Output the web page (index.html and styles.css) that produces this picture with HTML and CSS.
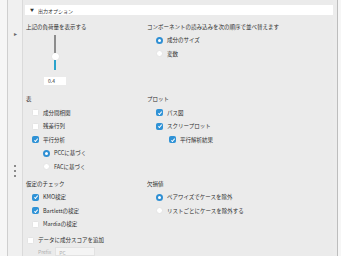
FILE: index.html
```html
<!DOCTYPE html>
<html>
<head>
  <meta charset="utf-8">
  <title>出力オプション</title>
  <link rel="stylesheet" href="styles.css">
</head>
<body>
  <div class="app">
    <div class="gutter"></div>
    <div class="sidebar">
      <span class="expand">&#9656;</span>
      <div class="grip"><i></i><i></i><i></i></div>
    </div>
    <div class="panel">
      <div class="header"><span class="tri">&#9660;</span>出力オプション</div>

      <div class="grid">
        <div class="section s1">
          <div class="title">上記の負荷量を表示する</div>
          <div class="slider">
            <div class="track"></div>
            <div class="knob"></div>
            <div class="fill"></div>
            <div class="value">0.4</div>
          </div>
        </div>
        <div class="section s1">
          <div class="title">コンポーネントの読み込みを次の順序で並べ替えます</div>
          <div class="row in-r"><span class="radio on"></span>成分のサイズ</div>
          <div class="row in-r"><span class="radio"></span>変数</div>
        </div>

        <div class="section s2">
          <div class="title">表</div>
          <div class="row in-l"><span class="check"></span>成分間相関</div>
          <div class="row in-l"><span class="check"></span>残差行列</div>
          <div class="row in-l"><span class="check on"></span>平行分析</div>
          <div class="row in-l2"><span class="radio on"></span>PCCに基づく</div>
          <div class="row in-l2"><span class="radio"></span>FACに基づく</div>
        </div>
        <div class="section s2">
          <div class="title">プロット</div>
          <div class="row in-r"><span class="check on"></span>パス図</div>
          <div class="row in-r"><span class="check on"></span>スクリープロット</div>
          <div class="row in-r2"><span class="check on"></span>平行解析結果</div>
        </div>

        <div class="section s3">
          <div class="title">仮定のチェック</div>
          <div class="row in-l"><span class="check on"></span>KMO検定</div>
          <div class="row in-l"><span class="check on"></span>Bartlettの検定</div>
          <div class="row in-l"><span class="check"></span>Mardiaの検定</div>
        </div>
        <div class="section s3">
          <div class="title">欠損値</div>
          <div class="row in-r"><span class="radio on"></span>ペアワイズでケースを除外</div>
          <div class="row in-r"><span class="radio"></span>リストごとにケースを除外する</div>
        </div>
      </div>

      <div class="row scores"><span class="check"></span>データに成分スコアを追加</div>
      <div class="prefix"><span class="plabel">Prefix</span><span class="pbox">PC</span></div>
    </div>
    <div class="scroll"></div>
  </div>
</body>
</html>
```

FILE: styles.css
```css
html, body {
  height: 100%;
  margin: 0;
}
body {
  background-color: #f6f6f6;
  font-family: "Noto Sans CJK JP", "Noto Sans", sans-serif;
  font-size: 5.5px;
  color: #2e2e2e;
  overflow: hidden;
}
.app {
  display: flex;
  height: 256px;
}
.gutter {
  width: 7px;
  background-color: #f6f6f6;
  border-right: 1px solid #cfcfcf;
}
.sidebar {
  width: 14px;
  background-color: #f0f0f0;
  border-right: 1px solid #dadada;
  display: flex;
  flex-direction: column;
  align-items: center;
  color: #666;
}
.expand {
  margin-top: 29px;
  font-size: 6px;
}
.grip {
  margin-top: 127px;
  display: flex;
  flex-direction: column;
  gap: 3.5px;
}
.grip i {
  width: 1.5px;
  height: 1.5px;
  background-color: #8a8a8a;
}
.panel {
  flex: 1;
  background-color: #ebebeb;
  padding: 5px 0 0 2px;
}
.header {
  height: 10px;
  background-color: #fff;
  display: flex;
  align-items: center;
  padding-left: 5px;
  font-size: 5px;
  color: #333;
}
.tri {
  font-size: 4px;
  margin-right: 4px;
}
.grid {
  display: grid;
  grid-template-columns: 121px 1fr;
  margin-top: 5.5px;
  padding-left: 1px;
}
.s1 { height: 72.5px; }
.s2 { height: 84.5px; }
.title {
  height: 13px;
  line-height: 13px;
}
.row {
  height: 13.5px;
  display: flex;
  align-items: center;
}
.in-l { padding-left: 6px; }
.in-l2 { padding-left: 17px; }
.in-r { padding-left: 9px; }
.in-r2 { padding-left: 22px; }
.check, .radio {
  width: 7px;
  height: 7px;
  box-sizing: border-box;
  background-color: #fff;
  border: 1px solid #e4e4e4;
  margin-right: 4px;
  flex: none;
}
.check {
  border-radius: 1.5px;
}
.check.on {
  background-color: #2f92d6;
  border-color: #2f92d6;
  position: relative;
}
.check.on::after {
  content: "";
  position: absolute;
  left: 1.8px;
  top: 0.6px;
  width: 1.4px;
  height: 3px;
  border: solid #fff;
  border-width: 0 1px 1px 0;
  transform: rotate(40deg);
}
.radio {
  border-radius: 50%;
}
.radio.on {
  border: 2px solid #2f8fd3;
}
.slider {
  display: flex;
  flex-direction: column;
  align-items: center;
  width: 22px;
  margin-left: 18px;
  padding-top: 1.5px;
}
.track {
  width: 1.5px;
  height: 18px;
  background-color: #8c8c8c;
}
.knob {
  width: 7px;
  height: 7px;
  border-radius: 50%;
  background-color: #fff;
  box-shadow: 0 0 1px #c9c9c9;
}
.fill {
  width: 2px;
  height: 10px;
  background-color: #2aa3cc;
}
.value {
  margin-top: 7px;
  width: 22px;
  height: 8px;
  background-color: #fff;
  line-height: 8px;
  padding-left: 4px;
  box-sizing: border-box;
  font-size: 5px;
  color: #333;
}
.scores {
  margin-top: 2.5px;
  padding-left: 2px;
}
.prefix {
  display: flex;
  align-items: center;
  padding-left: 13px;
  height: 9px;
  color: #b0b0b0;
  font-size: 5px;
}
.plabel {
  margin-right: 4px;
}
.pbox {
  width: 40px;
  height: 9px;
  line-height: 9px;
  background-color: #f4f4f4;
  border: 1px solid #e2e2e2;
  box-sizing: border-box;
  padding-left: 3px;
}
.scroll {
  width: 4px;
  background-color: #ececec;
  border-right: 1px solid #bdbdbd;
  margin-right: 3px;
}
```
